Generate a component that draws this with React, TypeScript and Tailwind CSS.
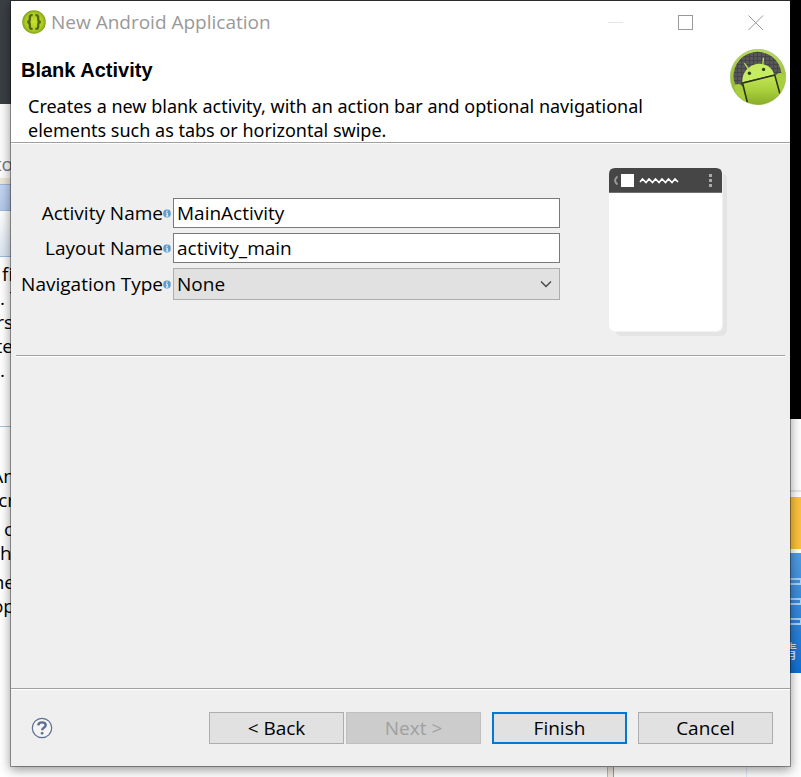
import React, { useState } from "react";

const font = "font-['Open_Sans','Noto_Sans_CJK_SC',sans-serif]";

function BracesIcon() {
  return (
    <svg className="size-6 shrink-0" viewBox="0 0 24 24" aria-hidden="true">
      <defs>
        <radialGradient id="braces" cx="0.5" cy="0.5" r="0.5">
          <stop offset="0" stopColor="#c6e22e" />
          <stop offset="0.75" stopColor="#a9cc1e" />
          <stop offset="1" stopColor="#7fa018" />
        </radialGradient>
      </defs>
      <circle cx="12" cy="12" r="11.800" fill="url(#braces)" />
      <g fill="none" stroke="#56641c" strokeWidth="2.300">
        <path d="M10.600 5.200H10Q7.800 5.200 7.800 7.600V9.600Q7.800 12 5.200 12Q7.800 12 7.800 14.400V16.400Q7.800 18.800 10 18.800H10.600" />
        <path d="M13.400 5.200H14Q16.200 5.200 16.200 7.600V9.600Q16.200 12 18.800 12Q16.200 12 16.200 14.400V16.400Q16.200 18.800 14 18.800H13.400" />
      </g>
    </svg>
  );
}

function AndroidBadge() {
  return (
    <svg className="size-14 shrink-0" viewBox="0 0 56 56" aria-hidden="true">
      <defs>
        <linearGradient id="ring" x1="0" y1="0" x2="0" y2="1">
          <stop offset="0" stopColor="#b9dc5c" />
          <stop offset="0.5" stopColor="#9dc43a" />
          <stop offset="1" stopColor="#84a626" />
        </linearGradient>
        <linearGradient id="robot" x1="0" y1="0" x2="0" y2="1">
          <stop offset="0" stopColor="#c0e658" />
          <stop offset="0.5" stopColor="#a9d03c" />
          <stop offset="1" stopColor="#88ac28" />
        </linearGradient>
        <pattern id="mesh" width="4" height="4" patternUnits="userSpaceOnUse">
          <rect width="4" height="4" fill="#454547" />
          <rect width="3" height="3" fill="#58585a" />
        </pattern>
        <clipPath id="disc"><circle cx="28" cy="28" r="27.400" /></clipPath>
      </defs>
      <circle cx="28" cy="28" r="27.700" fill="url(#ring)" stroke="#9db867" strokeWidth="0.600" />
      <path d="M5 35A24 24 0 1 1 51.500 25L28 42Z" fill="url(#mesh)" />
      <g clipPath="url(#disc)">
        <path d="M12.500 34.500L44.500 26.500L52 56H18Z" fill="url(#robot)" />
        <path d="M4 38Q6 34.500 9 35Q12 35.500 12.500 38L17 56H10Z" fill="#a8cf3e" />
        <path d="M45.500 27.500Q46.500 24 50 24Q53 24 55 28L56 36L51 46Z" fill="#a8cf3e" />
        <path d="M12.800 35L17.500 54M45 27L50 45" stroke="#2c3212" strokeWidth="1.500" />
      </g>
      <path d="M12.300 33.300C11.800 25 17 17.400 25.500 15.300C34 13.300 41.800 17.400 44.200 25.500Z" fill="#c6ed62" />
      <path d="M12 34.300L45 26" stroke="#2c3212" strokeWidth="1.400" />
      <path d="M14.800 14.600L18.600 20.400M33.400 9.400L32.800 15.400" stroke="#b9e052" strokeWidth="1.300" strokeLinecap="round" />
      <circle cx="19.400" cy="24.300" r="1.700" fill="#33400f" />
      <circle cx="33.600" cy="20.400" r="1.700" fill="#33400f" />
    </svg>
  );
}

function InfoDot() {
  return (
    <svg className="mr-0.5 h-[9px] w-2 shrink-0" viewBox="0 0 8 9" aria-hidden="true">
      <rect x="0.3" y="0.5" width="7.4" height="8" rx="3.4" fill="#5f9aca" />
      <path d="M4 1.6V3M2.9 4H4.2V6.8M2.8 7H5.4" stroke="#fff" strokeWidth="1" fill="none" />
    </svg>
  );
}

function PhonePreview() {
  return (
    <svg className="h-[168px] w-[118px] shrink-0" viewBox="0 0 118 168" aria-label="Blank activity preview" role="img">
      <rect x="6" y="5" width="112" height="163" rx="6" fill="#e4e4e4" />
      <rect x="0" y="0" width="114" height="164" rx="6" fill="#f1f1f1" />
      <rect x="0" y="0" width="113" height="163" rx="6" fill="#fff" />
      <path d="M0 25V6Q0 0 6 0H107Q113 0 113 6V25Z" fill="#464646" />
      <path d="M0 24.500H113" stroke="#707070" />
      <path d="M8.500 8.500Q3.500 12.500 8.500 16.500" fill="none" stroke="#999" strokeWidth="2" />
      <rect x="12" y="6" width="13" height="13" fill="#fff" />
      <path d="M31 14L33.500 11L37 14.500L40 11L43.500 14.500L46.500 11L50 14.500L53 11L56.500 14.500L59.500 11L63 14.500L66 11L69 14" fill="none" stroke="#fff" strokeWidth="1.600" />
      <path d="M100 6h3v3h-3zM100 11h3v3h-3zM100 16h3v3h-3z" fill="#aaa" />
    </svg>
  );
}

function Row({ id, label, children }: { id: string; label: string; children: React.ReactNode }) {
  return (
    <div className="flex items-center">
      <label htmlFor={id} className="w-[147px] shrink-0 text-right whitespace-nowrap">{label}</label>
      <InfoDot />
      {children}
    </div>
  );
}

function Line({ children, end }: { children: React.ReactNode; end?: boolean }) {
  return <p className={`flex h-6 items-center whitespace-nowrap ${end ? "justify-end" : "justify-start"}`}>{children}</p>;
}

function LeftDesktop() {
  return (
    <div className="w-[11px] shrink-0 overflow-hidden bg-white text-[19px]">
      <div className="h-[104px] bg-[#3a3f44]" />
      <div className="-mr-0.5 h-[74px] bg-[#fcfcfc] pt-12 text-[#777]"><Line end>to</Line></div>
      <div className="h-1.5 bg-[#ece7d6]" />
      <div className="h-[27px] border-y border-[#9fb6dd] bg-linear-to-b from-[#c3d6f3] to-[#b4c8e9]" />
      <div className="h-[46px] border-b border-[#9fbce0] bg-linear-to-b from-white to-[#dbe5f0]" />
      <div className="-mr-0.5 h-[170px] border-b border-[#a9c3e6] pt-[5px]">
        <div className="pl-0.5"><Line>fi</Line></div>
        <Line>. T</Line>
        <Line end>rs</Line>
        <Line end>te</Line>
        <Line>.</Line>
      </div>
      <div className="-mr-1 pt-[37px]">
        <Line end>An</Line>
        <Line end>cr</Line>
        <div className="pt-[5px] pl-1"><Line>c</Line></div>
        <Line>h</Line>
        <div className="pt-[5px]"><Line end>ne</Line></div>
        <Line end>op</Line>
      </div>
    </div>
  );
}

function RightDesktop() {
  return (
    <div className="w-[11px] shrink-0 overflow-hidden bg-[#fdfdfd]">
      <div className="h-[419px] bg-black" />
      <div className="h-[73px] border-b-2 border-[#e6e6e6]" />
      <div className="mt-[5px] h-[52px] bg-[#fcc13d]" />
      <div className="mt-1 h-[120px] bg-linear-to-b from-[#509be0] to-[#0b6fd2] pt-[25px]">
        <div className="flex flex-col gap-[13px]">
          <div className="h-[7px] border-y-2 border-r border-[#a9d0f4]" />
          <div className="h-[7px] border-y-2 border-r border-[#a9d0f4]" />
          <div className="h-[7px] border-y-2 border-r border-[#a9d0f4]" />
        </div>
        <p className="mt-3 flex h-7 items-center justify-end pr-1 text-[18px] text-[#d6e9fb]">请</p>
      </div>
    </div>
  );
}

const button = "h-8 w-[135px] border border-[#adadad] bg-[#e1e1e1]";
const field = "h-[30px] w-full min-w-0 border border-[#7a7a7a] bg-white px-[3px] outline-none";

export default function App() {
  const [activity, setActivity] = useState("MainActivity");
  const [layout, setLayout] = useState("activity_main");
  return (
    <div className={`flex min-h-screen flex-col overflow-hidden bg-white text-[19px] leading-6 text-black ${font}`}>
      <div className="flex flex-1">
        <LeftDesktop />
        <main className="relative z-10 -mx-px flex min-w-0 flex-1 flex-col border border-black/35 border-t-[#2b2b2b] bg-[#efefef] bg-clip-padding shadow-[0_3px_10px_rgba(0,0,0,0.4)]">
          <header className="border-b border-white bg-white">
            <div className="flex h-[42px] items-center pr-[26px] pl-[11px] text-[#999]">
              <BracesIcon />
              <h1 className="ml-[5px] flex-1">New Android Application</h1>
              <div className="flex gap-[54px]">
                <button aria-label="Minimize" disabled>
                  <svg className="size-4" viewBox="0 0 16 16"><path d="M0 8.500H15" stroke="#e6e6e6" /></svg>
                </button>
                <button aria-label="Maximize">
                  <svg className="size-4" viewBox="0 0 16 16"><rect x="0.500" y="1.500" width="14" height="14" fill="none" stroke="#999" /></svg>
                </button>
                <button aria-label="Close">
                  <svg className="size-4" viewBox="0 0 16 16"><path d="M0.500 1.500L15 16M15 1.500L0.500 16" stroke="#999" /></svg>
                </button>
              </div>
            </div>
            <div className="flex justify-between border-b border-[#a0a0a0] pr-1 pl-2.5">
              <div className="min-w-0 pt-[15px]">
                <h2 className="font-['Liberation_Sans',sans-serif] text-[20px] font-bold">Blank Activity</h2>
                <p className="mt-3 min-h-12 max-w-[660px] pl-[7px] font-['Noto_Sans',sans-serif] text-[18px]">
                  Creates a new blank activity, with an action bar and optional navigational elements such as tabs or horizontal swipe.
                </p>
              </div>
              <div className="pt-1.5"><AndroidBadge /></div>
            </div>
          </header>

          <section className="mx-[5px] flex justify-between border-b border-[#a0a0a0] pt-6 pr-[58px] pb-[19px]">
            <div className="flex min-w-0 flex-1 flex-col gap-[5px] pt-[30px] pr-[49px]">
              <Row id="activity" label="Activity Name">
                <input id="activity" className={field} value={activity} onChange={(e) => setActivity(e.target.value)} />
              </Row>
              <Row id="layout" label="Layout Name">
                <input id="layout" className={field} value={layout} onChange={(e) => setLayout(e.target.value)} />
              </Row>
              <Row id="navigation" label="Navigation Type">
                <div className="relative w-full min-w-0">
                  <select id="navigation" className="block h-8 w-full appearance-none border border-[#adadad] bg-[#e1e1e1] px-[3px] outline-none">
                    <option>None</option>
                  </select>
                  <svg className="pointer-events-none absolute top-3 right-2 h-2 w-3" viewBox="0 0 12 8" aria-hidden="true">
                    <path d="M1 1.500L6 6.500L11 1.500" fill="none" stroke="#444" strokeWidth="1.300" />
                  </svg>
                </div>
              </Row>
            </div>
            <PhonePreview />
          </section>
          <div className="mx-[5px] min-h-4 flex-1 border-t border-white" />

          <footer className="border-t border-[#a0a0a0]">
            <div className="flex items-center border-t border-white py-[22px] pr-[17px] pl-5">
              <button aria-label="Help" className="mr-auto">
                <svg className="size-[22px]" viewBox="0 0 22 22">
                  <circle cx="11" cy="11" r="9.700" fill="#f4f4f4" stroke="#5d6f91" strokeWidth="1.200" />
                  <path d="M7.200 8.300Q7.500 5.400 11 5.400Q14.700 5.400 14.700 8.100Q14.700 9.600 12.900 10.700Q11.200 11.700 11.200 13.300" fill="none" stroke="#5d6f91" strokeWidth="2.400" />
                  <rect x="9.700" y="15" width="2.800" height="2.600" rx="1" fill="#5d6f91" />
                </svg>
              </button>
              <div className="flex gap-[11px]">
                <div className="flex gap-0.5">
                  <button className={button}>&lt; Back</button>
                  <button disabled className="h-8 w-[135px] border border-[#bfbfbf] bg-[#cccccc] text-[#a0a0a0]">Next &gt;</button>
                </div>
                <button className="h-8 w-[135px] border-2 border-[#0078d7] bg-[#e1e1e1]">Finish</button>
                <button className={button}>Cancel</button>
              </div>
            </div>
          </footer>
        </main>
        <RightDesktop />
      </div>
      <div className="flex h-2.5 bg-white">
        <div className="flex-1" />
        <div className="w-[7px] border-r border-l border-r-[#999] border-l-[#a9bcd8] bg-[#efe9df]" />
        <div className="w-[187px] bg-[#fdfdfd]"><div className="ml-[132px] h-full w-px bg-[#dce8f4]" /></div>
      </div>
    </div>
  );
}
